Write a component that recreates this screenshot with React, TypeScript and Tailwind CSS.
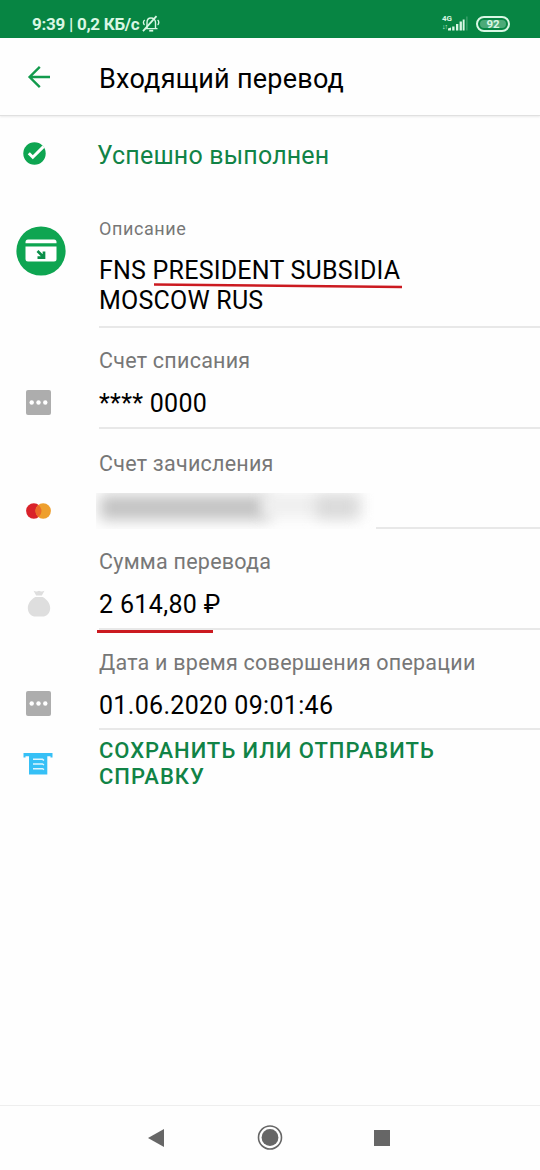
import React from 'react';

interface DetailRowProps {
  icon: React.ReactNode;
  label: string;
  className: string;
  iconClassName: string;
  labelClassName?: string;
  lineClassName?: string;
  children: React.ReactNode;
}

/* Status bar icons */
const BellOffIcon: React.FC = () => (
  <svg className="w-[18px] h-[18px]" viewBox="0 0 18 18" fill="none" stroke="currentColor" strokeWidth={1.4}>
    <path d="M3.5 13.600h12M5 13.400V7.6C5 4.800 6.500 3 9 3s4.500 1.800 4.500 4.600V13.400" />
    <path d="M7.200 15.700h4" strokeWidth={1.8} />
    <path d="M1 16.200L14.500 1.200" strokeWidth={1.8} />
    <path d="M2.800 5C1 6.200 1 8.800 2.600 9.800M15.600 5c1.600 1.200 1.600 3.800 0 4.800" />
  </svg>
);

const SignalIcon: React.FC = () => (
  <svg className="w-[20px] h-[15px]" viewBox="0 0 20 15" fill="currentColor">
    <path d="M0 14.500V12.500L3 11.500v3zM4.200 10.500h2.300v4H4.200zM8 8h2.300v6.500H8zM11.600 5.500h2.300v9h-2.300zM14.700 3.500H16.600v11h-1.900z" />
    <path d="M18.400 .5h1v14h-1z" opacity={0.35} />
  </svg>
);

const BackIcon: React.FC = () => (
  <svg className="w-[24px] h-[24px]" viewBox="0 0 24 24" fill="none" stroke="#129a4c" strokeWidth={2.4}>
    <path d="M23 12H3M12.800 1.800L2.600 12l10.200 10.200" />
  </svg>
);

const CheckIcon: React.FC = () => (
  <svg className="w-[23px] h-[23px]" viewBox="0 0 23 23">
    <circle cx="11.500" cy="11.500" r="11.200" fill="#0ea551" />
    <path d="M5.800 11.200l4 4L20.500 4.600" fill="none" stroke="#fff" strokeWidth={3} />
  </svg>
);

const IncomingCardIcon: React.FC = () => (
  <svg className="w-[50px] h-[50px]" viewBox="0 0 50 50">
    <circle cx="25" cy="25" r="24.600" fill="#0ea551" />
    <path d="M9.500 17.200v-1.200q0-2.500 2.500-2.500h26q2.500 0 2.500 2.500v1.200z" fill="#fff" />
    <path d="M9.500 20.500h31V33q0 2.500-2.500 2.500H12q-2.500 0-2.500-2.500z" fill="#fff" />
    <path d="M21.500 25l6 6M28 25.500v6.200h-6.500" fill="none" stroke="#0a8f49" strokeWidth={2.700} />
  </svg>
);

const DotsIcon: React.FC = () => (
  <svg className="w-[25px] h-[25px]" viewBox="0 0 25 25">
    <rect width="25" height="25" rx="2" fill="#adadad" />
    <g fill="#fff">
      <circle cx="5.700" cy="12.500" r="2.200" />
      <circle cx="12.500" cy="12.500" r="2.200" />
      <circle cx="19.300" cy="12.500" r="2.200" />
    </g>
  </svg>
);

const MastercardIcon: React.FC = () => (
  <svg className="w-[25px] h-[16px]" viewBox="0 0 25 16">
    <circle cx="7.800" cy="8" r="7.700" fill="#d9222a" />
    <circle cx="17.200" cy="8" r="7.700" fill="#ee9f2d" />
    <path d="M12.500 1.900a7.700 7.700 0 0 1 0 12.200a7.700 7.700 0 0 1 0-12.200z" fill="#ec6a28" />
  </svg>
);

const MoneyBagIcon: React.FC = () => (
  <svg className="w-[24px] h-[28px]" viewBox="0 0 24 28" fill="#dedede">
    <path d="M6.500 .8q3 1.300 5.500 0q2.500 1.300 5.500 0L14.800 5.400H9.200z" />
    <path d="M8.500 7h7C19.800 9 23.200 13.500 23.200 18c0 5-3.500 8.600-8 8.600H8.800c-4.500 0-8-3.600-8-8.600C.8 13.500 4.200 9 8.500 7z" />
  </svg>
);

const ReceiptIcon: React.FC = () => (
  <svg className="w-[30px] h-[22px]" viewBox="0 0 30 22">
    <path d="M.500 0h29v4.500h-2V3.300h-3.200V21.500H6V3.300H2.500v1.200h-2z" fill="#36c0f6" />
    <path d="M10 6.300h9.500l1.500 1M10 11h9.500l1.500 1M10 15.700h9.500l1.500 1" fill="none" stroke="#dff5fe" strokeWidth={1.400} />
  </svg>
);

const DetailRow: React.FC<DetailRowProps> = ({
  icon,
  label,
  className,
  iconClassName,
  labelClassName = 'text-[21.5px] tracking-[0.24px]',
  lineClassName = 'border-b-2 border-[#e8e8e8]',
  children,
}) => (
  <div className={`flex ${className}`}>
    <div className={`w-[77px] mr-[22px] flex shrink-0 justify-center items-start ${iconClassName}`}>{icon}</div>
    <div className={`flex-1 ${lineClassName}`}>
      <div className={`leading-[28px] text-[#777] whitespace-nowrap ${labelClassName}`}>{label}</div>
      {children}
    </div>
  </div>
);

const StatusBar: React.FC = () => (
  <header className="h-[38px] bg-[#078543] text-[#d9f7e4] flex items-start justify-between pl-[32px] pr-[30px]">
    <div className="flex items-center pt-[14px]">
      <span className="text-[17px] leading-[20px] font-bold tracking-[-0.27px] whitespace-nowrap">9:39 | 0,2 КБ/с</span>
      <span className="ml-[3px]">
        <BellOffIcon />
      </span>
    </div>
    <div className="flex pt-[14px]">
      <div className="w-[11px] flex flex-col items-end">
        <span className="text-[8px] leading-[9px] font-bold">4G</span>
        <span className="text-[7px] leading-[8px] mr-[5px] tracking-[-1px]">↓↑</span>
      </div>
      <div className="mt-[2px] mr-[8px] -ml-[4px]">
        <SignalIcon />
      </div>
      <div className="w-[34px] h-[16px] rounded-full border-2 border-current p-[2px] mt-[2px]">
        <div className="h-full rounded-full bg-[#4caa78] text-[11.5px] leading-[9px] font-bold text-center">92</div>
      </div>
    </div>
  </header>
);

const App: React.FC = () => (
  <div className="w-[540px] h-[1170px] bg-[#fefefe] flex flex-col overflow-hidden text-black font-[Roboto,sans-serif]">
    <StatusBar />

    {/* Title */}
    <div className="h-[78px] mb-px flex items-center border-b border-[#e0e0e0] shadow-[0_1px_2px_rgba(0,0,0,0.08)] shrink-0">
      <div className="w-[77px] mr-[22px] flex justify-center">
        <BackIcon />
      </div>
      <h1 className="text-[27px] leading-[32px] tracking-[0.24px] whitespace-nowrap pt-[4px]">Входящий перевод</h1>
    </div>

    <main className="flex-1">
      <div className="h-[98px] flex items-start">
        <div className="w-[69px] mr-[28px] flex justify-center pt-[25px]">
          <CheckIcon />
        </div>
        <div className="pt-[23px] text-[25px] leading-[32px] tracking-[0.18px] text-[#118346] whitespace-nowrap">
          Успешно выполнен
        </div>
      </div>

      <DetailRow
        icon={<IncomingCardIcon />}
        label="Описание"
        className="h-[113px]"
        iconClassName="pl-[5px] pt-[11px]"
        labelClassName="text-[18px] tracking-[0.6px]"
      >
        <div className="pt-[13px] text-[25px] leading-[29.5px] tracking-[0.22px] whitespace-nowrap">
          FNS{' '}
          <span className="relative">
            PRESIDENT SUBSIDIA
            <svg className="absolute left-[1px] top-[27px] w-[248px] h-[6px]" viewBox="0 0 248 6">
              <path d="M0 1.500L248 4" stroke="#cb1a20" strokeWidth={2.400} />
            </svg>
          </span>
          <br />
          MOSCOW RUS
        </div>
      </DetailRow>

      <DetailRow icon={<DotsIcon />} label="Счет списания" className="h-[101px] pt-[19px]" iconClassName="pt-[43px]">
        <div className="pt-[14px] text-[25px] leading-[30px] tracking-[0.3px]">**** 0000</div>
      </DetailRow>

      {/* Account number is hidden */}
      <DetailRow
        icon={<MastercardIcon />}
        label="Счет зачисления"
        className="h-[100px] pt-[21px]"
        iconClassName="pt-[53px]"
        lineClassName=""
      >
        <div className="flex items-end h-[51px]">
          <div className="relative -ml-[3px] w-[280px] h-[36px] overflow-hidden shrink-0">
            <div className="absolute left-[4px] top-[2px] w-[170px] h-[25px] rounded bg-[#c4c4c4] blur-[7px]" />
            <div className="absolute left-[165px] top-0 w-[100px] h-[24px] bg-[#efefef] blur-[7px]" />
            <div className="absolute left-[220px] top-[3px] w-[42px] h-[22px] bg-[#d9d9d9] blur-[7px]" />
          </div>
          <div className="flex-1 h-[2px] bg-[#e8e8e8]" />
        </div>
      </DetailRow>

      <DetailRow icon={<MoneyBagIcon />} label="Сумма перевода" className="h-[101px] pt-[19px]" iconClassName="pt-[42px]">
        <div className="relative pt-[14px] text-[25px] leading-[30px] tracking-[0.35px]">
          2 614,80 ₽
          <div className="absolute -left-[2px] top-[54px] w-[116px] h-[2.5px] bg-[#cb1a20]" />
        </div>
      </DetailRow>

      <DetailRow
        icon={<DotsIcon />}
        label="Дата и время совершения операции"
        className="h-[100px] pt-[19px]"
        iconClassName="pt-[42px]"
      >
        <div className="pt-[14px] text-[25px] leading-[30px] tracking-[0.32px]">01.06.2020 09:01:46</div>
      </DetailRow>

      <button className="flex text-left pt-[8px]">
        <div className="w-[76px] mr-[23px] flex justify-center pt-[15px]">
          <ReceiptIcon />
        </div>
        <span className="text-[22px] leading-[26px] font-medium tracking-[0.98px] text-[#118346]">
          СОХРАНИТЬ ИЛИ ОТПРАВИТЬ
          <br />
          СПРАВКУ
        </span>
      </button>
    </main>

    {/* System navigation */}
    <nav className="h-[65px] shrink-0 border-t border-[#eee] flex items-center justify-between pl-[148px] pr-[150px] text-[#666]">
      <svg className="w-[16px] h-[19px]" viewBox="0 0 16 19" fill="currentColor">
        <path d="M0 9L16 0v18z" />
      </svg>
      <svg className="w-[26px] h-[26px] ml-[2px]" viewBox="0 0 26 26">
        <circle cx="13" cy="12.500" r="11.500" fill="none" stroke="currentColor" strokeWidth={1.600} />
        <circle cx="13" cy="12.500" r="8.400" fill="currentColor" />
      </svg>
      <div className="w-[16px] h-[16px] mb-px bg-[#666]" />
    </nav>
  </div>
);

export default App;
